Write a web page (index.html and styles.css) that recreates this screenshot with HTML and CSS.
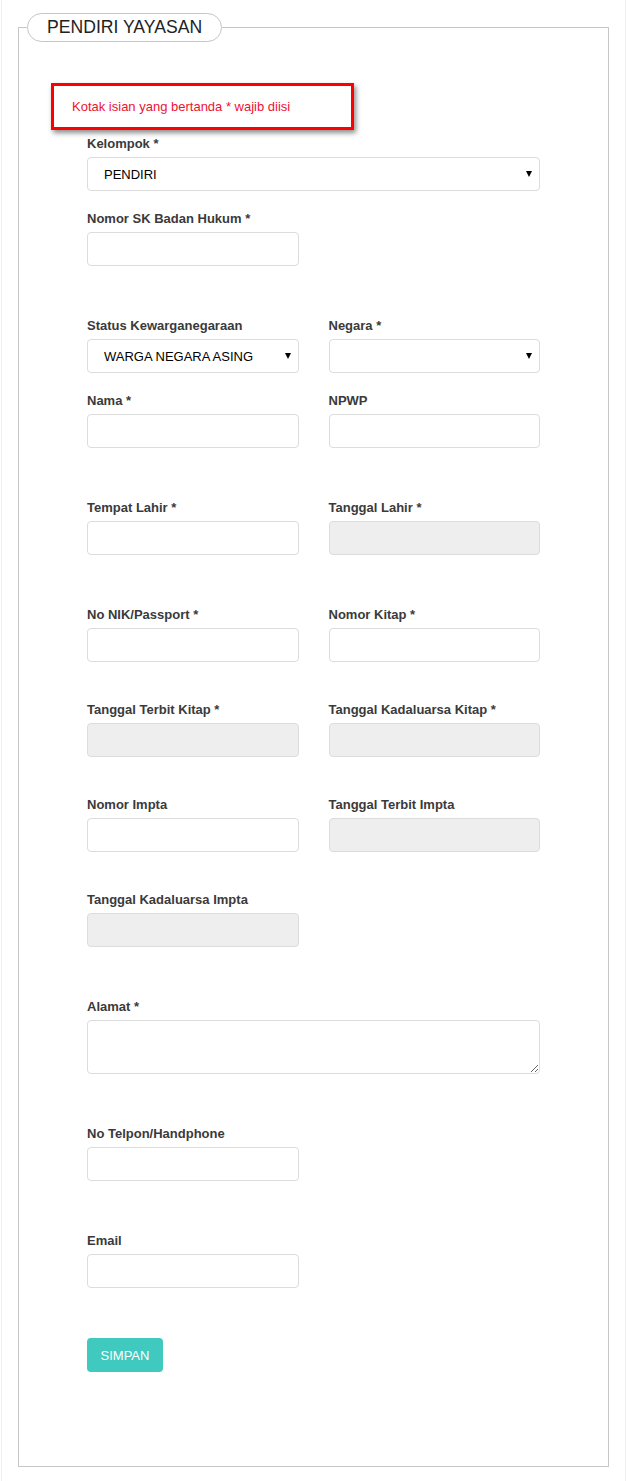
FILE: index.html
```html
<!DOCTYPE html>
<html lang="id">
<head>
<meta charset="utf-8">
<title>Pendiri Yayasan</title>
<link rel="stylesheet" href="styles.css">
</head>
<body>
<div class="page">
  <fieldset class="panel">
    <legend class="panel-title">PENDIRI YAYASAN</legend>
    <div class="panel-body">
      <div class="notice">Kotak isian yang bertanda * wajib diisi</div>
      <form class="form">
        <div class="group first">
          <label class="lbl">Kelompok *</label>
          <div class="select-wrap">
            <select class="ctl select"><option>PENDIRI</option></select>
            <span class="caret"></span>
          </div>
        </div>

        <div class="group gap-s">
          <label class="lbl">Nomor SK Badan Hukum *</label>
          <input class="ctl half" type="text">
        </div>

        <div class="group gap-l cols">
          <div>
            <label class="lbl">Status Kewarganegaraan</label>
            <div class="select-wrap">
              <select class="ctl select"><option>WARGA NEGARA ASING</option></select>
              <span class="caret"></span>
            </div>
          </div>
          <div>
            <label class="lbl">Negara *</label>
            <div class="select-wrap">
              <select class="ctl select"><option></option></select>
              <span class="caret"></span>
            </div>
          </div>
        </div>

        <div class="group gap-s cols">
          <div>
            <label class="lbl">Nama *</label>
            <input class="ctl" type="text">
          </div>
          <div>
            <label class="lbl">NPWP</label>
            <input class="ctl" type="text">
          </div>
        </div>

        <div class="group gap-l cols">
          <div>
            <label class="lbl">Tempat Lahir *</label>
            <input class="ctl" type="text">
          </div>
          <div>
            <label class="lbl">Tanggal Lahir *</label>
            <input class="ctl readonly" type="text" readonly>
          </div>
        </div>

        <div class="group gap-l cols">
          <div>
            <label class="lbl">No NIK/Passport *</label>
            <input class="ctl" type="text">
          </div>
          <div>
            <label class="lbl">Nomor Kitap *</label>
            <input class="ctl" type="text">
          </div>
        </div>

        <div class="group gap-m cols">
          <div>
            <label class="lbl">Tanggal Terbit Kitap *</label>
            <input class="ctl readonly" type="text" readonly>
          </div>
          <div>
            <label class="lbl">Tanggal Kadaluarsa Kitap *</label>
            <input class="ctl readonly" type="text" readonly>
          </div>
        </div>

        <div class="group gap-m cols">
          <div>
            <label class="lbl">Nomor Impta</label>
            <input class="ctl" type="text">
          </div>
          <div>
            <label class="lbl">Tanggal Terbit Impta</label>
            <input class="ctl readonly" type="text" readonly>
          </div>
        </div>

        <div class="group gap-m">
          <label class="lbl">Tanggal Kadaluarsa Impta</label>
          <input class="ctl half readonly" type="text" readonly>
        </div>

        <div class="group gap-l">
          <label class="lbl">Alamat *</label>
          <textarea class="ctl area"></textarea>
        </div>

        <div class="group gap-l">
          <label class="lbl">No Telpon/Handphone</label>
          <input class="ctl half" type="text">
        </div>

        <div class="group gap-l">
          <label class="lbl">Email</label>
          <input class="ctl half" type="text">
        </div>

        <button type="button" class="btn">SIMPAN</button>
      </form>
    </div>
  </fieldset>
</div>
</body>
</html>
```

FILE: styles.css
```css
* { box-sizing: border-box; }

html, body {
  margin: 0;
  padding: 0;
  background: #ffffff;
}

body {
  font-family: "Liberation Sans", Arial, sans-serif;
  color: #333333;
}

.page {
  margin: 0 1px;
  min-height: 1481px;
  border-left: 1px solid #f0f0f0;
  border-right: 1px solid #f0f0f0;
  padding: 13px 16px 0 16px;
}

.panel {
  margin: 0;
  padding: 0;
  border: 1px solid #c6c6c6;
  min-width: 0;
}

.panel-title {
  margin-left: 8px;
  padding: 0 19px;
  height: 29px;
  line-height: 27px;
  white-space: nowrap;
  border: 1px solid #c6c6c6;
  border-radius: 15px;
  font-size: 17.6px;
  color: #222222;
  background: #ffffff;
}

.panel-body {
  padding: 41px 0 94px 0;
}

.notice {
  margin-left: 32px;
  width: 303px;
  height: 47px;
  border: 3px solid #ff0000;
  box-shadow: 2px 3px 5px rgba(0, 0, 0, 0.45);
  padding-left: 18px;
  display: flex;
  align-items: center;
  font-size: 13px;
  color: #ee1133;
}

.form {
  padding: 0 68px;
}

.group.first { margin-top: 3px; }
.gap-s { margin-top: 17px; }
.gap-m { margin-top: 37px; }
.gap-l { margin-top: 49px; }

.cols {
  display: grid;
  grid-template-columns: 1fr 1fr;
  column-gap: 30px;
}

.lbl {
  display: block;
  font-size: 13px;
  font-weight: bold;
  line-height: 20px;
  margin-bottom: 4px;
  padding-top: 1px;
  height: 20px;
  color: #3a3a3a;
}

.ctl {
  display: block;
  width: 100%;
  height: 34px;
  border: 1px solid #dcdcdc;
  border-radius: 4px;
  background: #ffffff;
  font-family: "Liberation Sans", Arial, sans-serif;
  font-size: 13px;
  color: #000000;
  padding: 0 16px;
  margin: 0;
  outline: none;
}

.half { width: 212px; }

.readonly { background: #eeeeee; }

.area {
  height: 54px;
  resize: vertical;
  padding: 6px 12px;
}

.select-wrap {
  position: relative;
}

.select {
  -webkit-appearance: none;
  appearance: none;
}

.caret {
  position: absolute;
  right: 8px;
  top: 14px;
  width: 0;
  height: 0;
  border-left: 3px solid transparent;
  border-right: 3px solid transparent;
  border-top: 6px solid #000000;
  pointer-events: none;
}

.btn {
  display: block;
  margin-top: 50px;
  width: 76px;
  height: 34px;
  border: none;
  border-radius: 4px;
  background: #40c9be;
  color: #ffffff;
  font-family: "Liberation Sans", Arial, sans-serif;
  font-size: 13px;
  padding: 0;
  cursor: pointer;
}
```
